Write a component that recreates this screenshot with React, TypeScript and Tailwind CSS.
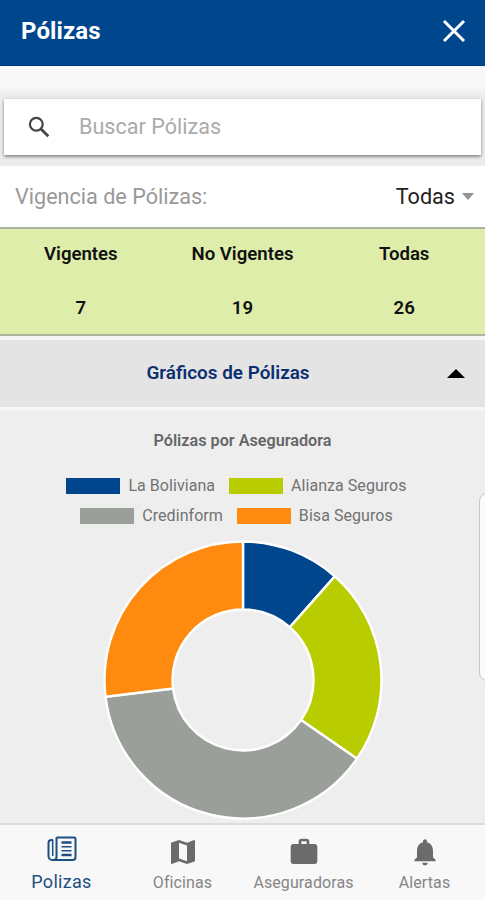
import type { ReactNode } from "react"

interface Insurer {
  name: string
  count: number
  color: string
  swatch: string
}

const insurers: Insurer[] = [
  { name: "La Boliviana", count: 3, color: "#00468c", swatch: "bg-[#00468c]" },
  { name: "Alianza Seguros", count: 6, color: "#b9cc00", swatch: "bg-[#b9cc00]" },
  { name: "Credinform", count: 10, color: "#9a9f9a", swatch: "bg-[#9a9f9a]" },
  { name: "Bisa Seguros", count: 7, color: "#ff8a10", swatch: "bg-[#ff8a10]" },
]

const stats = [
  { label: "Vigentes", value: 7 },
  { label: "No Vigentes", value: 19 },
  { label: "Todas", value: 26 },
]

function DonutChart({ data }: { data: Insurer[] }) {
  const center = 140
  const outer = 138.5
  const inner = 70.5
  const total = data.reduce((sum, d) => sum + d.count, 0)

  const point = (radius: number, value: number) => {
    const angle = (value / total) * Math.PI * 2
    return `${center + radius * Math.sin(angle)} ${center - radius * Math.cos(angle)}`
  }

  let start = 0
  const slices = data.map((d) => {
    const from = start
    const to = start + d.count
    start = to
    const large = d.count / total > 0.5 ? 1 : 0
    return {
      ...d,
      path: `M${point(outer, from)}A${outer} ${outer} 0 ${large} 1 ${point(outer, to)}L${point(inner, to)}A${inner} ${inner} 0 ${large} 0 ${point(inner, from)}Z`,
    }
  })

  return (
    <svg width="280" height="280" viewBox="0 0 280 280" className="block shrink-0">
      {slices.map((s) => (
        <path key={s.name} d={s.path} fill={s.color} stroke="#fff" strokeWidth="2.4" strokeLinejoin="bevel" />
      ))}
    </svg>
  )
}

function LegendItem({ item }: { item: Insurer }) {
  return (
    <div className="flex items-center gap-2">
      <span className={`h-4 w-[54px] ${item.swatch}`} />
      <span className="text-[16px] leading-[30px] tracking-[0.05px] text-[#727272]">{item.name}</span>
    </div>
  )
}

function NewspaperIcon() {
  return (
    <svg width="30" height="26" viewBox="0 0 30 26" fill="none" stroke="#1d4f80" strokeWidth="2">
      <path d="M9.500 1.500h17.700q1.300 0 1.300 1.300v18.400a2.800 2.800 0 0 1-2.800 2.800H5.500" />
      <path d="M9.500 1.500v19.500a3 3 0 0 1-3 3H5.500A3.900 3.900 0 0 1 1.500 20V7a3 3 0 0 1 3-3H6" />
      <path d="M5.700 4v16" strokeWidth="1.500" />
      <path d="M14.500 6.500h10M14.500 19h10" strokeWidth="2.600" />
      <path d="M14.500 10.800h10M14.500 14.800h10" strokeWidth="1.600" />
    </svg>
  )
}

function MapIcon() {
  return (
    <svg width="32" height="32" viewBox="0 0 24 24" fill="#6b6b6b">
      <path d="M20.500 3l-.16.030L15 5.100 9 3 3.360 4.900c-.21.070-.36.250-.36.480V20.500c0 .280.220.500.500.500l.16-.030L9 18.900l6 2.100 5.640-1.900c.21-.07.360-.25.360-.48V3.500c0-.28-.22-.5-.5-.5zM15 19l-6-2.110V5l6 2.110V19z" />
    </svg>
  )
}

function BriefcaseIcon() {
  return (
    <svg width="32" height="32" viewBox="0 0 24 24" fill="#6b6b6b">
      <path d="M20 6h-4V4c0-1.110-.89-2-2-2h-4c-1.110 0-2 .890-2 2v2H4c-1.110 0-1.990.890-1.990 2L2 19c0 1.110.890 2 2 2h16c1.110 0 2-.89 2-2V8c0-1.110-.89-2-2-2zm-6 0h-4V4h4v2z" />
    </svg>
  )
}

function BellIcon() {
  return (
    <svg width="32" height="32" viewBox="0 0 24 24" fill="#6b6b6b">
      <path d="M12 22c1.100 0 2-.9 2-2h-4c0 1.100.890 2 2 2zm6-6v-5c0-3.070-1.640-5.640-4.500-6.320V4c0-.83-.67-1.500-1.500-1.500s-1.500.670-1.500 1.500v.680C7.630 5.360 6 7.920 6 11v5l-2 2v1h16v-1l-2-2z" />
    </svg>
  )
}

interface TabProps {
  label: string
  icon: ReactNode
  active?: boolean
}

function Tab({ label, icon, active }: TabProps) {
  return (
    <button className="flex flex-1 flex-col items-center">
      <span className={`flex h-8 items-center justify-center ${active ? "mt-[8px]" : "mt-[11px]"}`}>{icon}</span>
      <span
        className={
          active
            ? "mt-[6px] text-[18px] leading-[22px] tracking-[0.3px] text-[#1d4f80]"
            : "mt-[4px] text-[16px] leading-[22px] tracking-[0.1px] text-[#858585]"
        }
      >
        {label}
      </span>
    </button>
  )
}

export default function App() {
  return (
    <div className="relative flex h-[900px] w-[485px] flex-col overflow-hidden bg-[#eeeeee] font-[Roboto,sans-serif]">
      <header className="flex h-[66px] shrink-0 items-start justify-between border-b border-[#003a7c] bg-[#00468c] pr-[19px] pl-[21px]">
        <h1 className="mt-[16px] text-[24px] leading-[30px] font-bold tracking-[0.1px] text-white">Pólizas</h1>
        <svg width="24" height="24" viewBox="0 0 24 24" className="mt-[19px]" stroke="#fff" strokeWidth="3">
          <path d="M2 2l20 20M22 2L2 22" />
        </svg>
      </header>

      <div className="h-[100px] shrink-0 bg-linear-to-b from-[#f8f8f8] from-[20px] to-[#ececec] to-[30px] px-[4px] pt-[33px]">
        <div className="flex h-[56px] items-center bg-white shadow-[0_2px_3px_rgba(0,0,0,0.38),0_0_3px_rgba(0,0,0,0.12)]">
          <svg width="22" height="22" viewBox="0 0 22 22" className="ml-[24px]" fill="none" stroke="#444444">
            <circle cx="8.300" cy="8.300" r="6.400" strokeWidth="2.200" />
            <path d="M13 13l7.300 7.300" strokeWidth="2.800" />
          </svg>
          <span className="ml-[29px] text-[21.600px] leading-[30px] text-[#ababab]">Buscar Pólizas</span>
        </div>
      </div>

      <div className="flex h-[61px] shrink-0 items-center justify-between bg-white pt-[2px] pr-[11px] pl-[15px]">
        <span className="text-[21.600px] text-[#999999]">Vigencia de Pólizas:</span>
        <div className="flex items-center gap-[7px]">
          <span className="text-[21.600px] text-[#222222]">Todas</span>
          <svg width="12" height="7" viewBox="0 0 12 7" className="-mt-[2px]" fill="#929292">
            <path d="M0 0h12L6 7z" />
          </svg>
        </div>
      </div>

      <div className="grid h-[109px] shrink-0 grid-cols-3 border-y-2 border-[#aab5a0] bg-[#deedaa]">
        {stats.map((s) => (
          <div key={s.label} className="flex flex-col items-center text-[18.600px] font-semibold text-[#111111]">
            <span className="mt-[13px] leading-[24px]">{s.label}</span>
            <span className="mt-[30px] leading-[24px]">{s.value}</span>
          </div>
        ))}
      </div>

      <div className="flex h-[75px] shrink-0 items-center border-y-4 border-[#f6f6f6] bg-[#e4e4e4] pr-[20px]">
        <span className="flex-1 pl-[9px] text-center text-[18.900px] font-semibold text-[#0c2f70]">
          Gráficos de Pólizas
        </span>
        <svg width="18" height="9" viewBox="0 0 18 9" fill="#000">
          <path d="M0 9h18L9 0z" />
        </svg>
      </div>

      <section className="flex flex-1 flex-col items-center">
        <h2 className="mt-[19px] text-[16.200px] leading-[22px] font-semibold text-[#666666]">
          Pólizas por Aseguradora
        </h2>
        <div className="mt-[19px] flex -translate-x-[6px] gap-[14px]">
          {insurers.slice(0, 2).map((i) => (
            <LegendItem key={i.name} item={i} />
          ))}
        </div>
        <div className="flex -translate-x-[6px] gap-[14px]">
          {insurers.slice(2).map((i) => (
            <LegendItem key={i.name} item={i} />
          ))}
        </div>
        <div className="mt-[9px] flex h-[283px] justify-center">
          <DonutChart data={insurers} />
        </div>
      </section>

      <nav className="flex h-[77px] shrink-0 border-t-2 border-[#dddddd] bg-[#f8f8f8] pl-px">
        <Tab label="Polizas" icon={<NewspaperIcon />} active />
        <Tab label="Oficinas" icon={<MapIcon />} />
        <Tab label="Aseguradoras" icon={<BriefcaseIcon />} />
        <Tab label="Alertas" icon={<BellIcon />} />
      </nav>

      {/* edge panel handle */}
      <div className="absolute top-[493px] -right-[14px] h-[188px] w-5 rounded-lg border border-[#c8c8c8] bg-[#fbfbfb]" />
    </div>
  )
}
